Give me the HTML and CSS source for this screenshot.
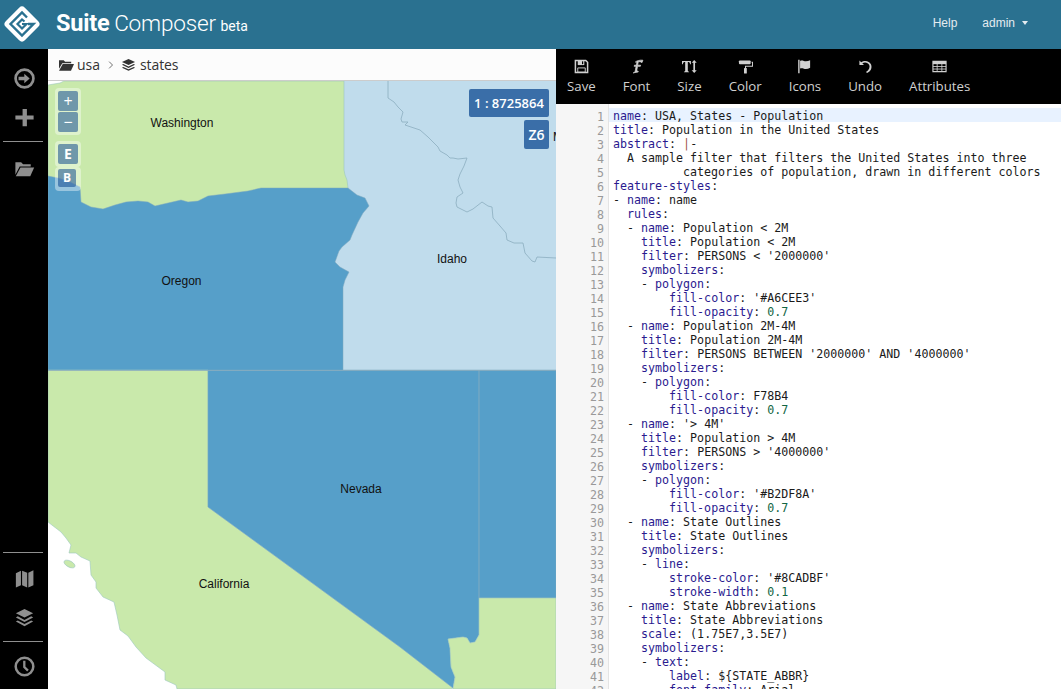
FILE: index.html
```html
<!DOCTYPE html>
<html lang="en">
<head>
<meta charset="utf-8">
<title>Suite Composer</title>
<link rel="stylesheet" href="styles.css">
</head>
<body>
<header class="topbar">
  <svg class="logo" viewBox="0 0 36 36" aria-hidden="true">
    <rect x="4.500" y="4.500" width="27" height="27" rx="4" transform="rotate(45 18 18)" fill="#fff"/>
    <path d="M23 11.500 L18 6.500 L6.500 18 L18 29.500 L29.500 18 L24 18" fill="none" stroke="#2a7190" stroke-width="2.400"/>
    <path d="M20.500 15.500 L18 13.500 L13.500 18 L18 22.500 L22.500 18 L18 18" fill="none" stroke="#2a7190" stroke-width="2.200"/>
  </svg>
  <div class="brand"><b>Suite</b> <span class="brand-light">Composer</span> <small>beta</small></div>
  <nav class="topnav">
    <a>Help</a>
    <a class="user">admin <i class="caret"></i></a>
  </nav>
</header>
<div class="shell">
  <aside class="sidebar">
    <div class="side-btn"><svg viewBox="0 0 24 24"><circle cx="12" cy="12" r="9.300" fill="none" stroke="currentColor" stroke-width="2.800"/><path d="M5.800 10.300h6V7l5.600 5-5.600 5v-3.300h-6z" fill="currentColor"/></svg></div>
    <div class="side-btn"><svg viewBox="0 0 24 24"><path d="M10 3h4.500v6.800H21.500v4.400H14.500V21H10v-6.800H2.500V9.800H10z" fill="currentColor"/></svg></div>
    <hr class="side-rule first">
    <div class="side-btn"><svg viewBox="0 0 24 24"><path d="M2.500 5.500h6l2 2h8v2.500H7L2.500 18.500z" fill="currentColor"/><path d="M7.800 11h14.300L18 20H2.900z" fill="currentColor"/></svg></div>
    <div class="side-fill"></div>
    <hr class="side-rule mid">
    <div class="side-btn"><svg viewBox="0 0 24 24"><path d="M3 6.500l5.300-2.500v15L3 21.500zM9.500 4l5.300 2v15.500l-5.300-2.500zM16 6l5.300-2.500V19L16 21.500z" fill="currentColor"/></svg></div>
    <div class="side-btn"><svg viewBox="0 0 24 24"><path d="M12 3l9 4.500-9 4.500-9-4.500z" fill="currentColor"/><path d="M5 10.800L3 12l9 4.800 9-4.800-2-1.200-7 3.700zM5 15L3 16.200l9 4.800 9-4.800L19 15l-7 3.700z" fill="currentColor"/></svg></div>
    <hr class="side-rule">
    <div class="side-btn"><svg viewBox="0 0 24 24"><circle cx="12" cy="12" r="9.200" fill="none" stroke="currentColor" stroke-width="2.600"/><path d="M11.800 6v6.500l3.800 3.800" fill="none" stroke="currentColor" stroke-width="2.400"/></svg></div>
  </aside>

  <section class="map-pane">
    <div class="crumbs">
      <svg class="crumb-icon" viewBox="0 0 16 14"><path d="M0 2h5l1.500 1.500H13V5H3.500L0 11z" fill="#333"/><path d="M4 6h12l-3.200 7H0z" fill="#333"/></svg>
      <span>usa</span>
      <svg class="crumb-sep" viewBox="0 0 8 12"><path d="M1.500 1.500L6 6l-4.500 4.500" fill="none" stroke="#555" stroke-width="1.100"/></svg>
      <svg class="crumb-icon" viewBox="0 0 16 14"><path d="M8 .5l7 3.300-7 3.300-7-3.300z" fill="#333"/><path d="M2.500 6L1 6.800l7 3.300 7-3.300L13.500 6 8 8.600zM2.500 9L1 9.800l7 3.300 7-3.300L13.500 9 8 11.600z" fill="#333"/></svg>
      <span class="crumb-last">states</span>
    </div>
    <div class="map">
      <svg class="map-svg" viewBox="48 81 508 608" aria-label="Map of western US states">
        <rect class="land-idaho" x="325" y="81" width="231" height="290"/>
        <path class="land-green" d="M64 81H344V170L345 175L347 180L348 188V220H48V85L60 83Z"/>
        <path class="land-blue" d="M48 176L58 178L68 181L80 187L81 202L91 207L103 209L115 205L126 202L138 201L148 202L155 206L168 203L181 200L188 202L198 201L208 196L225 194L248 191L261 188H348L357 195L365 198L369 206L363 213L358 222L352 235L350 240L342 247L339 251L335 262L340 267L349 272L345 280L343 287V371H48Z"/>
        <path class="border" d="M388 81V98L394 102L398 107L403 112L401 119L402 122L408 122L405 125L420 130L428 137L438 147L440 151L447 155L450 158L453 158L458 159L467 158L464 166L460 174L458 180L460 187L463 193L457 197L456 203L457 207L463 210L467 212L473 209L482 202L488 206L492 207L493 218L500 226L506 233L507 240L514 243L523 243L525 253L532 261L535 262L537 257L556 258"/>
        <path class="land-green" d="M48 370H208V507L400 647L453 688L450 689H177L176 685L165 680L165 672L146 658L136 647L128 636L120 630L117 615L114 602L103 597L96 588L96 582L91 575L90 561L81 557L76 553L69 553L71 545L66 538L61 532L48 522Z"/>
        <ellipse class="land-green" cx="69.500" cy="564" rx="6" ry="3" transform="rotate(28 69.500 564)"/>
        <path class="land-blue" d="M208 370H556V598H479V635L475 642L470 643L467 638L463 637L448 639L450 648L451 667L455 677L453 688L400 647L208 507Z"/>
        <path class="land-green" d="M479 598H556V689H453L455 677L451 667L450 648L448 639L463 637L467 638L470 643L475 642L479 635Z"/>
        <path class="border" d="M479 370V598"/>
        <path class="border" d="M48 370.500H556"/>
        <text class="map-label" x="182" y="127">Washington</text>
        <text class="map-label" x="181.500" y="285">Oregon</text>
        <text class="map-label" x="452" y="263">Idaho</text>
        <text class="map-label" x="361" y="492.500">Nevada</text>
        <text class="map-label" x="224" y="588">California</text>
        <text class="map-label" x="558" y="141">M</text>
      </svg>
      <div class="ctl ctl-zoom"><button class="ctl-btn">+</button><button class="ctl-btn">−</button></div>
      <div class="ctl ctl-e"><button class="ctl-btn bold">E</button></div>
      <div class="ctl ctl-b"><button class="ctl-btn bold small">B</button></div>
      <div class="badge scale">1 : 8725864</div>
      <div class="badge zoomlevel">Z6</div>
    </div>
  </section>

  <section class="editor-pane">
    <div class="toolbar">
      <div class="tool"><svg viewBox="0 0 16 16"><path d="M1.500 1.500h11l2 2v11h-13z" fill="none" stroke="currentColor" stroke-width="1.600"/><path d="M4 1.500h7v5H4z" fill="currentColor"/><path d="M8.500 2.500h1.300v3H8.500z" fill="#000"/><path d="M4 9.500h8v4.500H4z" fill="none" stroke="currentColor" stroke-width="1"/></svg><span>Save</span></div>
      <div class="tool"><svg viewBox="0 0 16 16"><path d="M4.500 14.800c1.800-.3 2-1.200 2.400-3.500l.7-3.500H5.500l.3-1.200h2l.4-2c.2-1.200-.5-1.600-1.400-1.300 1.300-1.500 5-2.400 8-2l-1 2.600c-1-.9-2.600-1.300-4-.8l-.6 3.500h3.200l-.3 1.200H9.100l-.6 3.200c-.2 1.300 0 2 1.400 2.300l-.1.500z" fill="currentColor" stroke="currentColor" stroke-width=".8"/></svg><span>Font</span></div>
      <div class="tool"><svg viewBox="0 0 16 16"><path d="M0 2h9.500v3.500H8.600C8.400 4 8 3.300 6.200 3.300v9c0 .9.300 1.100 1.300 1.200v.7H2.100v-.7c1-.1 1.300-.3 1.300-1.200v-9C1.600 3.300 1.100 4 .9 5.500H0z" fill="currentColor"/><path d="M13 1l2.700 3h-1.800v8h1.800L13 15l-2.700-3h1.800V4h-1.800z" fill="currentColor"/></svg><span>Size</span></div>
      <div class="tool"><svg viewBox="0 0 16 16"><rect x="1" y="1.500" width="12.500" height="4" rx="1" fill="currentColor"/><path d="M14.500 3.500h1v4.200H8v2" fill="none" stroke="currentColor" stroke-width="1.100"/><rect x="6.400" y="9.500" width="3" height="6" rx=".6" fill="currentColor"/></svg><span>Color</span></div>
      <div class="tool"><svg viewBox="0 0 16 16"><path d="M2 .8v14.500" stroke="currentColor" stroke-width="1.500"/><path d="M3.300 2c2.400-1.200 4 .4 6.200.4 1.500 0 3-.6 4.500-1.200v8c-1.500.9-3 1.400-4.500 1.400-2.200 0-3.800-1.500-6.200-.4z" fill="currentColor"/></svg><span>Icons</span></div>
      <div class="tool"><svg viewBox="0 0 16 16"><path d="M1.500 1.500v5h5L4.600 4.700C7 3 10.800 3.800 12 6.500c1 2.600-.3 5.600-3.500 7.300l1.200 1.200c4-1.700 5.600-5.500 4.200-9.100C12.200 2 7 .8 3.400 3.500z" fill="currentColor"/></svg><span>Undo</span></div>
      <div class="tool"><svg viewBox="0 0 16 16"><path d="M1 2.500h14v11H1z" fill="none" stroke="currentColor" stroke-width="1.200"/><path d="M1 3h14v2.500H1z" fill="currentColor"/><path d="M1 8h14M1 10.700h14M5.500 5v8M10.500 5v8" stroke="currentColor" stroke-width=".9"/></svg><span>Attributes</span></div>
    </div>
    <div class="editor">
      <div class="gutter"><div>1</div><div>2</div><div>3</div><div>4</div><div>5</div><div>6</div><div>7</div><div>8</div><div>9</div><div>10</div><div>11</div><div>12</div><div>13</div><div>14</div><div>15</div><div>16</div><div>17</div><div>18</div><div>19</div><div>20</div><div>21</div><div>22</div><div>23</div><div>24</div><div>25</div><div>26</div><div>27</div><div>28</div><div>29</div><div>30</div><div>31</div><div>32</div><div>33</div><div>34</div><div>35</div><div>36</div><div>37</div><div>38</div><div>39</div><div>40</div><div>41</div><div>42</div></div>
      <div class="code">
<div class="line active"><span class="k">name</span>: USA, States - Population</div>
<div class="line"><span class="k">title</span>: Population in the United States</div>
<div class="line"><span class="k">abstract</span>: <span class="m">|</span>-</div>
<div class="line">  A sample filter that filters the United States into three</div>
<div class="line">          categories of population, drawn in different colors</div>
<div class="line"><span class="k">feature-styles</span>:</div>
<div class="line">- <span class="k">name</span>: name</div>
<div class="line">  <span class="k">rules</span>:</div>
<div class="line">  - <span class="k">name</span>: Population &lt; 2M</div>
<div class="line">    <span class="k">title</span>: Population &lt; 2M</div>
<div class="line">    <span class="k">filter</span>: PERSONS &lt; '2000000'</div>
<div class="line">    <span class="k">symbolizers</span>:</div>
<div class="line">    - <span class="k">polygon</span>:</div>
<div class="line">        <span class="k">fill-color</span>: '#A6CEE3'</div>
<div class="line">        <span class="k">fill-opacity</span>: <span class="n">0.7</span></div>
<div class="line">  - <span class="k">name</span>: Population 2M-4M</div>
<div class="line">    <span class="k">title</span>: Population 2M-4M</div>
<div class="line">    <span class="k">filter</span>: PERSONS BETWEEN '2000000' AND '4000000'</div>
<div class="line">    <span class="k">symbolizers</span>:</div>
<div class="line">    - <span class="k">polygon</span>:</div>
<div class="line">        <span class="k">fill-color</span>: F78B4</div>
<div class="line">        <span class="k">fill-opacity</span>: <span class="n">0.7</span></div>
<div class="line">  - <span class="k">name</span>: '&gt; 4M'</div>
<div class="line">    <span class="k">title</span>: Population &gt; 4M</div>
<div class="line">    <span class="k">filter</span>: PERSONS &gt; '4000000'</div>
<div class="line">    <span class="k">symbolizers</span>:</div>
<div class="line">    - <span class="k">polygon</span>:</div>
<div class="line">        <span class="k">fill-color</span>: '#B2DF8A'</div>
<div class="line">        <span class="k">fill-opacity</span>: <span class="n">0.7</span></div>
<div class="line">  - <span class="k">name</span>: State Outlines</div>
<div class="line">    <span class="k">title</span>: State Outlines</div>
<div class="line">    <span class="k">symbolizers</span>:</div>
<div class="line">    - <span class="k">line</span>:</div>
<div class="line">        <span class="k">stroke-color</span>: '#8CADBF'</div>
<div class="line">        <span class="k">stroke-width</span>: <span class="n">0.1</span></div>
<div class="line">  - <span class="k">name</span>: State Abbreviations</div>
<div class="line">    <span class="k">title</span>: State Abbreviations</div>
<div class="line">    <span class="k">scale</span>: (1.75E7,3.5E7)</div>
<div class="line">    <span class="k">symbolizers</span>:</div>
<div class="line">    - <span class="k">text</span>:</div>
<div class="line">        <span class="k">label</span>: ${STATE_ABBR}</div>
<div class="line">        <span class="k">font-family</span>: Arial</div>
      </div>
    </div>
  </section>
</div>
</body>
</html>
```

FILE: styles.css
```css
* { box-sizing: border-box; }
html, body { margin: 0; height: 100%; overflow: hidden; }
body { display: flex; flex-direction: column; background: #fff; font-family: "Open Sans", sans-serif; }

.topbar { flex: 0 0 49px; display: flex; align-items: center; background: #2a7190; color: #fff; padding: 0 33px 0 4px; }
.logo { width: 36px; height: 36px; margin-top: -2px; flex: none; }
.brand { margin-left: 16px; font-family: Roboto, "Liberation Sans", sans-serif; font-size: 23.500px; color: #fff; letter-spacing: -.2px; white-space: nowrap; margin-top: -4px; }
.brand b { font-weight: 700; }
.brand-light { font-weight: 300; font-size: 22.600px; margin-left: -1px; }
.brand small { font-size: 14px; font-weight: 400; margin-left: -1px; letter-spacing: 0; }
.topnav { margin-left: auto; display: flex; gap: 25px; font-family: "Liberation Sans", sans-serif; font-size: 12px; color: #e4ecf0; margin-top: -3px; }
.user { display: flex; align-items: center; gap: 7px; }
.caret { width: 0; height: 0; border-left: 3.500px solid transparent; border-right: 3.500px solid transparent; border-top: 4px solid #e4ecf0; }

.shell { flex: 1; display: flex; min-height: 0; }

.sidebar { flex: 0 0 48px; display: flex; flex-direction: column; background: #000; color: #8f8f8f; padding-top: 10px; padding-bottom: 3px; }
.side-btn { height: 39px; display: flex; align-items: center; justify-content: center; flex: none; }
.side-btn svg { width: 23px; height: 23px; }
.side-rule { width: 40px; height: 1px; border: 0; background: #8f8f8f; margin: 4px 3px 5px; flex: none; }
.side-rule.first { margin-bottom: 7px; }
.side-rule.mid { margin-bottom: 6px; }
.side-fill { flex: 1; }

.map-pane { flex: 0 0 508px; display: flex; flex-direction: column; min-height: 0; }
.crumbs { flex: 0 0 32px; display: flex; align-items: center; gap: 3px; padding: 0 0 0 11px; background: #fcfcfc; border-bottom: 1px solid #ccc; font-size: 14px; color: #333; }
.crumb-icon { width: 15px; height: 14px; }
.crumb-sep { width: 6px; height: 12px; margin: 0 4px 0 5px; }
.crumb-last { margin-left: 1px; letter-spacing: -.1px; }

.map { position: relative; flex: 1; overflow: hidden; background: #fff; }
.map-svg { display: block; width: 508px; height: 608px; }
.land-green { fill: #c9e9ab; stroke: #9cc8c0; stroke-width: .6; }
.land-blue { fill: #569fc9; stroke: #7fa9bf; stroke-width: .5; }
.land-idaho { fill: #c0dcec; }
.border { fill: none; stroke: #8cadbf; stroke-width: .8; }
.map-label { font-family: "Liberation Sans", sans-serif; font-size: 12px; fill: #111; text-anchor: middle; }

.ctl { position: absolute; left: 7px; width: 26px; padding: 3px; background: rgba(255,255,255,.4); border-radius: 4px; }
.ctl-zoom { top: 7px; height: 47px; }
.ctl-e { top: 60px; height: 26px; }
.ctl-b { top: 86px; height: 24px; padding: 2px 5px 2px 3px; }
.ctl-btn { display: flex; align-items: center; justify-content: center; width: 20px; height: 20px; padding: 0; margin: 0 0 1px; border: 0; border-radius: 2px; background: rgba(0,60,136,.5); color: #fff; font-family: "Open Sans", sans-serif; font-size: 16px; line-height: 1; }
.ctl-btn.bold { font-size: 14px; font-weight: 700; }
.ctl-btn.small { width: 18px; height: 18px; font-size: 12px; }

.badge { position: absolute; display: flex; align-items: center; justify-content: center; background: #3a6ea8; color: #fff; border-radius: 2px; font-family: "Open Sans", sans-serif; font-size: 13px; font-weight: 600; }
.scale { top: 8px; right: 7px; width: 80px; height: 28px; }
.zoomlevel { top: 39px; right: 7px; width: 25px; height: 29px; font-size: 14px; }

.editor-pane { flex: 1; display: flex; flex-direction: column; min-width: 0; min-height: 0; }
.toolbar { flex: 0 0 55px; display: flex; gap: 27px; padding: 0 0 0 11px; background: #000; color: #d0d0d0; }
.tool { display: flex; flex-direction: column; align-items: center; padding-top: 10px; font-size: 13.250px; line-height: 18px; }
.tool svg { width: 15px; height: 15px; margin-bottom: 3px; }

.editor { flex: 1; display: flex; min-height: 0; overflow: hidden; padding-top: 4px; font-family: "DejaVu Sans Mono", monospace; font-size: 11.650px; line-height: 14px; color: #1a1a1a; background: #fff; }
.gutter { flex: 0 0 53px; margin-top: -4px; padding: 6px 4px 0 0; background: #f6f6f6; border-right: 1px solid #e4e4e4; text-align: right; color: #999; }
.code { flex: 1; min-width: 0; }
.line { white-space: pre; height: 14px; padding-left: 4px; line-height: 16px; }
.line.active { background: #e8f2ff; }
.k { color: #2a1a8f; }
.m { color: #a1544a; }
.n { color: #116644; }
```
